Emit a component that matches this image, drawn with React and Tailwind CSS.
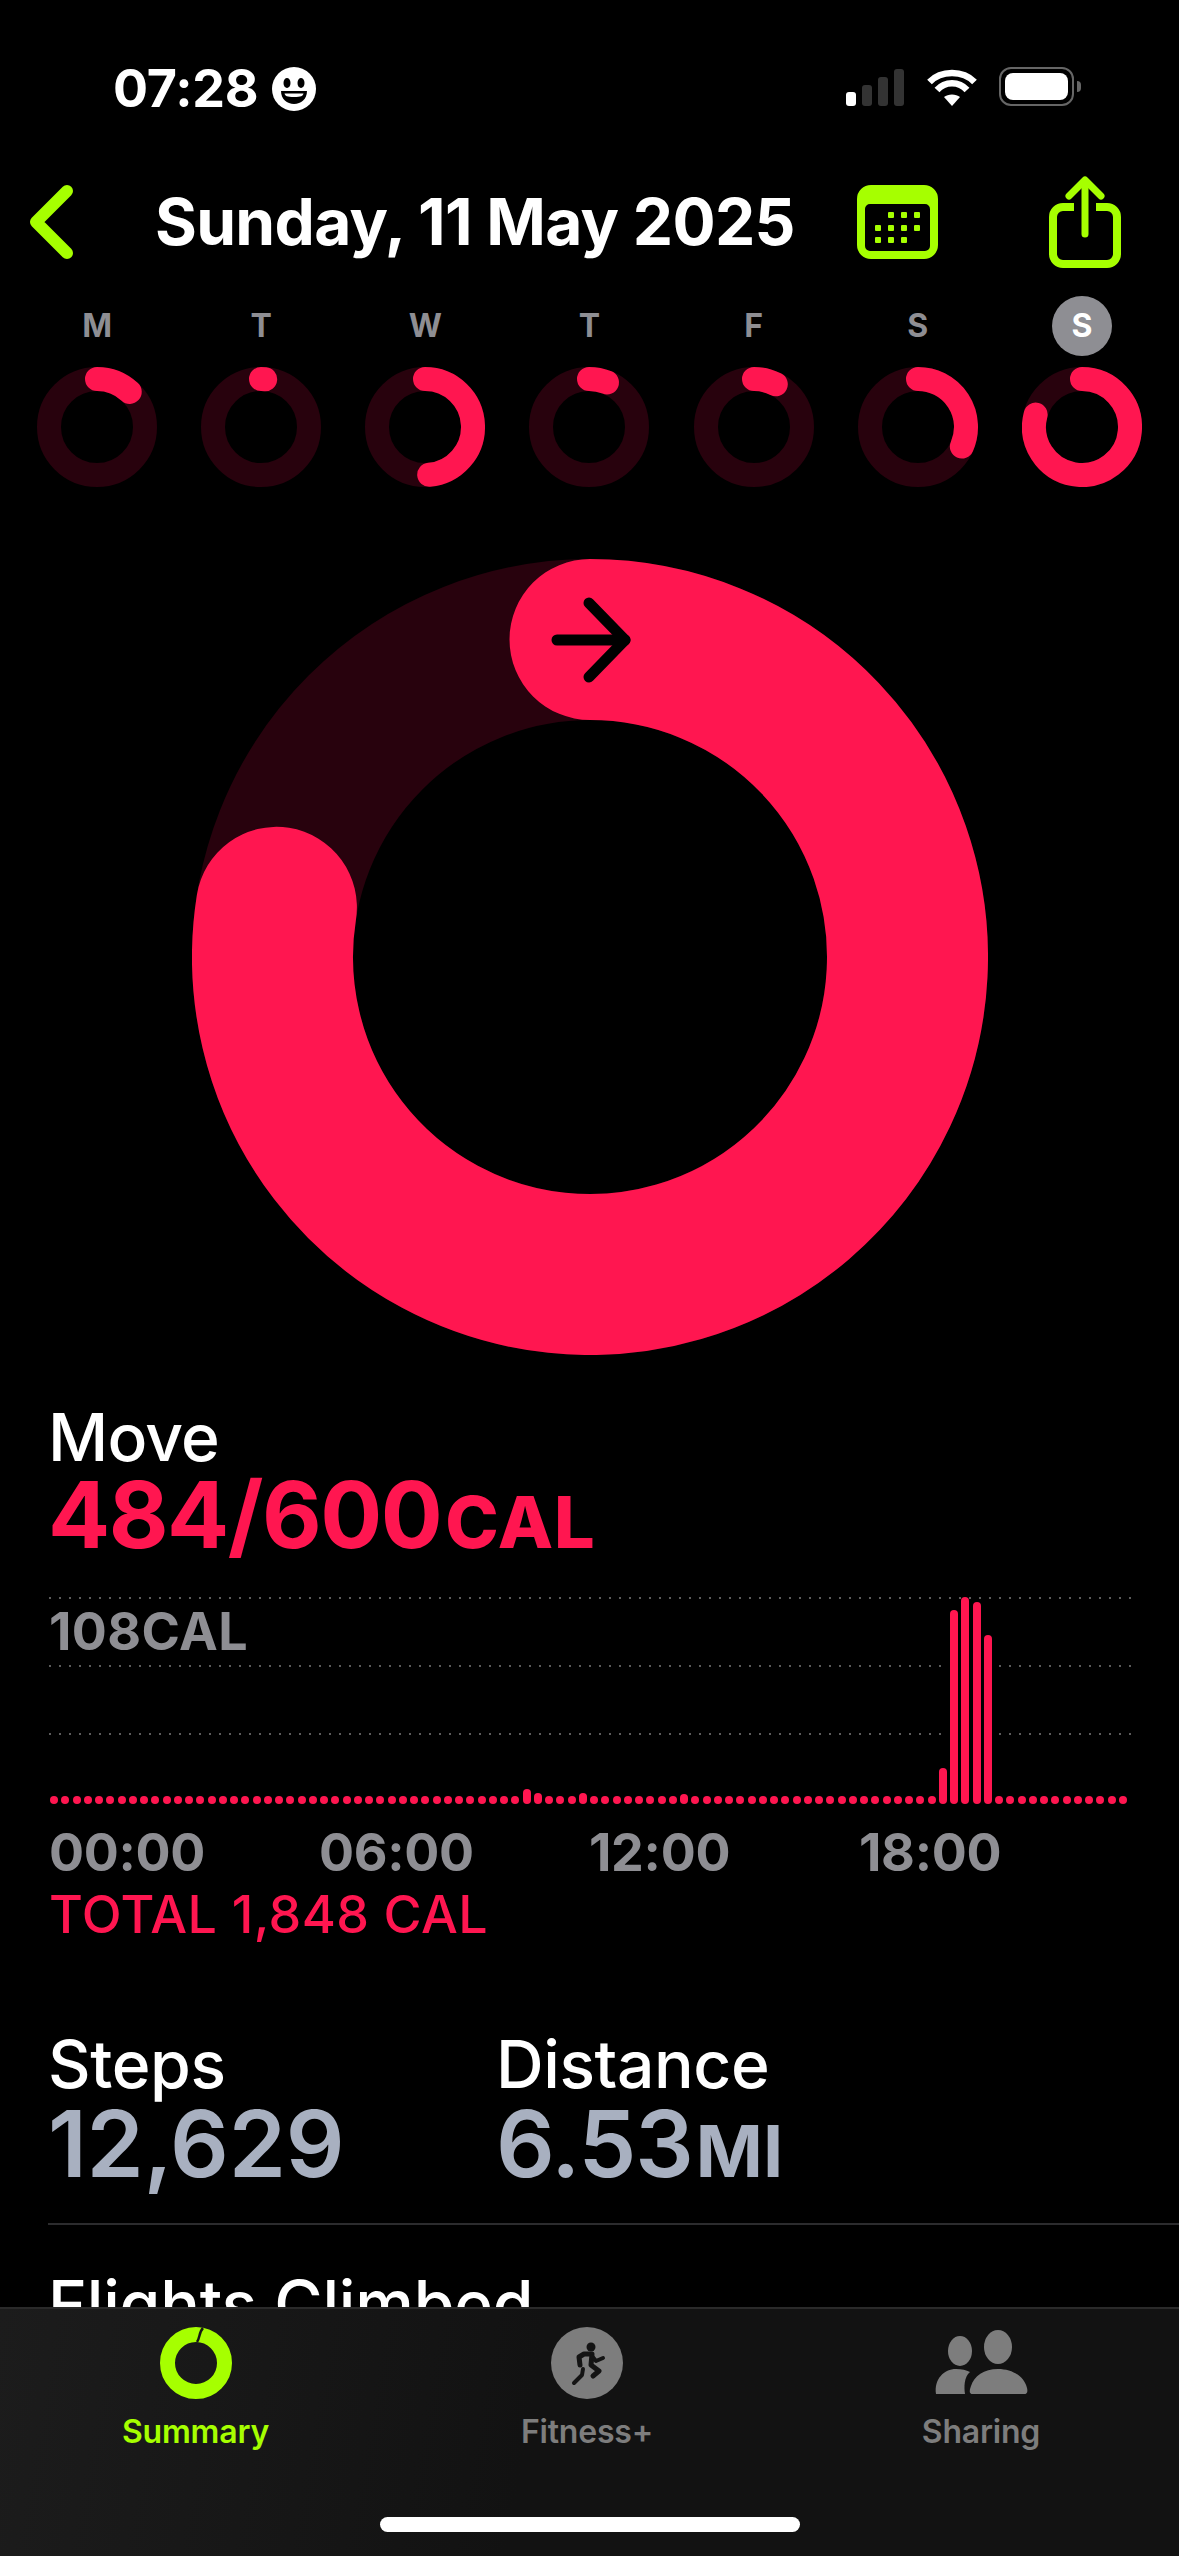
import React from 'react';

const PINK = '#ff1650';
const TRACK = '#28020d';
const LIME = '#a6ff00';

const days = [
  { label: 'M', end: 43 },
  { label: 'T', end: 5 },
  { label: 'W', end: 175 },
  { label: 'T', end: 22 },
  { label: 'F', end: 27 },
  { label: 'S', end: 114 },
  { label: 'S', end: 285, today: true },
];

// 15 minute buckets, everything not listed is just a dot
const barHeights = { 42: 15, 43: 11, 47: 11, 56: 10, 79: 36, 80: 194, 81: 207, 82: 202, 83: 169 };
const bars = Array.from({ length: 96 }, (_, i) => barHeights[i] || 8);

const arcPath = (cx, cy, r, endDeg) => {
  const a = (endDeg * Math.PI) / 180;
  const x = cx + r * Math.sin(a);
  const y = cy - r * Math.cos(a);
  return `M ${cx} ${cy - r} A ${r} ${r} 0 ${endDeg > 180 ? 1 : 0} 1 ${x} ${y}`;
};

const Ring = ({ size, stroke, end, children }) => {
  const c = size / 2;
  const r = (size - stroke) / 2;
  return (
    <svg width={size} height={size} viewBox={`0 0 ${size} ${size}`} className="block">
      <circle cx={c} cy={c} r={r} fill="none" stroke={TRACK} strokeWidth={stroke} />
      <path d={arcPath(c, c, r, end)} fill="none" stroke={PINK} strokeWidth={stroke} strokeLinecap="round" />
      {children}
    </svg>
  );
};

const StatusBar = () => (
  <div className="flex h-[176px] items-start justify-between pt-[67px] pl-[113px] pr-[98px]">
    <div className="flex items-center gap-[13px]">
      <span className="text-[52px] leading-[42px] font-bold tracking-[-0.2px] text-white">07:28</span>
      <svg width="44" height="44" viewBox="0 0 44 44">
        <circle cx="22" cy="22" r="22" fill="#fff" />
        <ellipse cx="15" cy="16" rx="3.5" ry="5" fill="#000" />
        <ellipse cx="29" cy="16" rx="3.5" ry="5" fill="#000" />
        <path d="M9 24 H35 C35 32 29 37 22 37 C15 37 9 32 9 24 Z" fill="#000" />
        <path d="M12.5 26.5 H31.5 C31 29 29 30 22 30 C15 30 13 29 12.5 26.5 Z" fill="#fff" />
      </svg>
    </div>
    <div className="flex items-start">
      <svg width="58" height="38" viewBox="0 0 58 38" className="mt-[2px]">
        <rect x="0" y="23" width="10" height="14" rx="3" fill="#fff" />
        <rect x="16" y="16" width="10" height="21" rx="3" fill="#333" />
        <rect x="32" y="8" width="10" height="29" rx="3" fill="#333" />
        <rect x="48" y="0" width="10" height="37" rx="3" fill="#333" />
      </svg>
      <svg width="50" height="38" viewBox="0 0 50 38" className="ml-[23px] mt-[2px]">
        <path d="M25 37 L17 28 C21 24.5 29 24.5 33 28 Z" fill="#fff" />
        <path d="M10 21 C18 12 32 12 40 21" fill="none" stroke="#fff" strokeWidth="6.5" />
        <path d="M2.5 13 C14 1 36 1 47.5 13" fill="none" stroke="#fff" strokeWidth="6.5" />
      </svg>
      <div className="ml-[22px] flex items-center">
        <div className="flex h-[39px] w-[75px] rounded-[12px] border-2 border-[#666] p-[4px]">
          <div className="h-full w-full rounded-[8px] bg-white" />
        </div>
        <div className="ml-[3px] h-[11px] w-[4px] rounded-r-full bg-[#666]" />
      </div>
    </div>
  </div>
);

const Header = () => (
  <div className="flex h-[92px] items-center pl-[29px]">
    <svg width="46" height="76" viewBox="0 0 46 76" className="shrink-0">
      <path d="M38 7 L7 38 L38 69" fill="none" stroke={LIME} strokeWidth="12" strokeLinecap="round" strokeLinejoin="round" />
    </svg>
    <h1 className="ml-[80px] w-[642px] text-[64px] leading-[92px] font-bold tracking-[-0.7px] whitespace-nowrap text-white">
      Sunday, 11 May 2025
    </h1>
    <svg width="81" height="74" viewBox="0 0 81 74" className="ml-[60px] shrink-0">
      <path fillRule="evenodd" d="M14 0 H67 A14 14 0 0 1 81 14 V60 A14 14 0 0 1 67 74 H14 A14 14 0 0 1 0 60 V14 A14 14 0 0 1 14 0 Z M13 19 A5 5 0 0 0 8 24 V61 A5 5 0 0 0 13 66 H68 A5 5 0 0 0 73 61 V24 A5 5 0 0 0 68 19 Z" fill={LIME} />
      {[[34, 30], [47, 30], [60, 30], [21, 43], [34, 43], [47, 43], [60, 43], [21, 55], [34, 55], [47, 55]].map(([x, y]) => (
        <rect key={`${x}-${y}`} x={x - 3} y={y - 3} width="6" height="6" rx="1" fill={LIME} />
      ))}
    </svg>
    <svg width="72" height="92" viewBox="0 0 72 92" className="ml-[111px] shrink-0">
      <path d="M25 31 H14 A10 10 0 0 0 4 41 V78 A10 10 0 0 0 14 88 H58 A10 10 0 0 0 68 78 V41 A10 10 0 0 0 58 31 H47" fill="none" stroke={LIME} strokeWidth="8" />
      <path d="M36 5 V58" fill="none" stroke={LIME} strokeWidth="7" strokeLinecap="round" />
      <path d="M20 20 L36 4 L52 20" fill="none" stroke={LIME} strokeWidth="7" strokeLinecap="round" strokeLinejoin="round" />
    </svg>
  </div>
);

const WeekStrip = () => (
  <div className="grid grid-cols-7 pl-[15px] pr-[15px] pt-[28px]">
    {days.map((d, i) => (
      <div key={i} className="flex flex-col items-center">
        <div
          className={`flex h-[60px] w-[60px] items-center justify-center rounded-full text-[32px] font-bold ${
            d.today ? 'bg-[#8e8e93] text-white' : 'text-[#8e8e93]'
          }`}
        >
          {d.label}
        </div>
        <div className="mt-[11px]">
          <Ring size={120} stroke={24} end={d.end} />
        </div>
      </div>
    ))}
  </div>
);

const MainRing = () => (
  <div className="flex justify-center pt-[72px]">
    <Ring size={796} stroke={161} end={279}>
      <g fill="none" stroke="#000" strokeWidth="11" strokeLinecap="round" strokeLinejoin="round">
        <path d="M365 81 H433" />
        <path d="M397 44 L433 81 L397 118" />
      </g>
    </Ring>
  </div>
);

// dotted guide line, the taller ones stop either side of the evening bars
const GridLine = ({ top, gap }) => {
  const dots = 'h-[2px] bg-[linear-gradient(to_right,#5c5c5c_2px,transparent_2px)] bg-[length:10px_2px]';
  return (
    <div style={{ top }} className="absolute right-0 left-0 flex">
      {gap ? (
        <>
          <div className={`w-[900px] ${dots}`} />
          <div className={`ml-[50px] flex-1 ${dots}`} />
        </>
      ) : (
        <div className={`flex-1 ${dots}`} />
      )}
    </div>
  );
};

const MoveSection = () => (
  <section className="pt-[45px] pl-[48px]">
    <div className="text-[66px] leading-[74px] font-medium tracking-[-0.8px] text-white">Move</div>
    <div className="mt-[-3px] flex items-baseline text-[#ff1650]">
      <span className="text-[92px] leading-[88px] font-bold tracking-[-1.5px]">484/600</span>
      <span className="ml-[4px] text-[72px] leading-[88px] font-extrabold tracking-[1px]">CAL</span>
    </div>

    <div className="relative mt-[31px] ml-[1px] h-[207px] w-[1082px]">
      <GridLine top={0} />
      <GridLine top={68} gap />
      <GridLine top={136} gap />
      <div className="absolute top-[10px] left-0 text-[52px] leading-[50px] font-bold tracking-[0.4px] text-[#8e8e93]">
        108CAL
      </div>
      <div className="absolute right-[3px] bottom-0 left-[1px] flex items-end justify-between">
        {bars.map((h, i) => (
          <div key={i} style={{ height: h }} className="w-[8px] rounded-full bg-[#ff1650]" />
        ))}
      </div>
    </div>

    <div className="mt-[24px] ml-[1px] grid w-[1080px] grid-cols-4 text-[52px] leading-[50px] font-bold tracking-[-0.3px] text-[#8e8e93]">
      <span>00:00</span>
      <span>06:00</span>
      <span>12:00</span>
      <span>18:00</span>
    </div>
    <div className="mt-[9px] ml-[1px] text-[52px] leading-[56px] font-medium tracking-[0.4px] text-[#ff1650]">TOTAL 1,848 CAL</div>
  </section>
);

const StatsSection = () => (
  <section className="pt-[84px]">
    <div className="flex pl-[48px]">
      <div className="w-[448px]">
        <div className="text-[66px] leading-[74px] font-medium tracking-[-0.4px] text-white">Steps</div>
        <div className="mt-[2px] text-[92px] leading-[82px] font-semibold tracking-[-0.3px] text-[#a8b0c0]">12,629</div>
      </div>
      <div>
        <div className="text-[66px] leading-[74px] font-medium tracking-[-0.4px] text-white">Distance</div>
        <div className="mt-[2px] flex items-baseline text-[#a8b0c0]">
          <span className="text-[92px] leading-[82px] font-semibold tracking-[-1px]">6.53</span>
          <span className="ml-[3px] text-[72px] leading-[82px] font-bold">MI</span>
        </div>
      </div>
    </div>
    <div className="mt-[31px] ml-[48px] h-[2px] bg-[#2c2c2e]" />
    <div className="mt-[42px] pl-[48px] text-[66px] leading-[74px] font-medium tracking-[-0.2px] text-white">Flights Climbed</div>
  </section>
);

const TabBar = () => (
  <nav className="relative h-[249px] shrink-0 border-t-2 border-[#2a2a2a] bg-[linear-gradient(100deg,#1c1c1c,#121212_45%)]">
    <div className="grid grid-cols-[391px_392px_396px] pt-[18px]">
      <div className="flex flex-col items-center">
        <svg width="72" height="72" viewBox="0 0 72 72">
          <circle cx="36" cy="36" r="28.5" fill="none" stroke={LIME} strokeWidth="15" />
          <path d="M43 1 C39 5 40 11 37 15" fill="none" stroke="#161616" strokeWidth="2.5" />
        </svg>
        <span className="mt-[15px] text-[32px] leading-[36px] font-semibold tracking-[-0.2px] text-[#a6ff00]">Summary</span>
      </div>
      <div className="flex flex-col items-center">
        <svg width="72" height="72" viewBox="0 0 72 72">
          <circle cx="36" cy="36" r="36" fill="#7d7d7d" />
          <circle cx="40" cy="20" r="4.5" fill="#141414" />
          <g fill="none" stroke="#141414" strokeWidth="4" strokeLinecap="round" strokeLinejoin="round">
            <path d="M29 38 L28 30 L33 27 H41 L40 38 L48 44 L42 49" strokeWidth="5" />
            <path d="M41 29 L45 34 L52 31" />
            <path d="M32 42 L31 48 L23 56" />
          </g>
        </svg>
        <span className="mt-[15px] text-[32px] leading-[36px] font-semibold tracking-[-0.2px] text-[#7d7d7d]">Fitness+</span>
      </div>
      <div className="flex flex-col items-center">
        <svg width="94" height="72" viewBox="0 0 94 72" className="fill-[#7d7d7d]">
          <ellipse cx="26" cy="24" rx="12" ry="15" />
          <ellipse cx="64" cy="20" rx="14" ry="17" />
          <path d="M2 67 C0 52 10 42 22 42 C28 42 32 43 36 45 C30 50 30 60 31 67 Z" />
          <path d="M39 67 C34 67 36 62 37 59 C40 49 50 42 64 42 C78 42 90 49 93 61 C94 65 93 67 90 67 Z" />
        </svg>
        <span className="mt-[15px] text-[32px] leading-[36px] font-semibold tracking-[-0.2px] text-[#7d7d7d]">Sharing</span>
      </div>
    </div>
    <div className="absolute bottom-[24px] left-[380px] h-[15px] w-[420px] rounded-full bg-white" />
  </nav>
);

export default function App() {
  return (
    <div className="flex h-[2556px] w-[1179px] flex-col overflow-hidden bg-black font-['Inter',sans-serif]">
      <main className="min-h-0 flex-1 overflow-hidden">
        <StatusBar />
        <Header />
        <WeekStrip />
        <MainRing />
        <MoveSection />
        <StatsSection />
      </main>
      <TabBar />
    </div>
  );
}
